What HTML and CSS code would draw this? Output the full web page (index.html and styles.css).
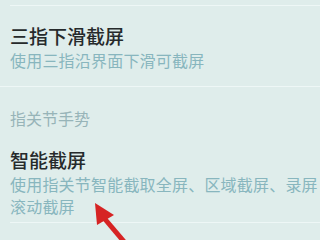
FILE: index.html
```html
<!DOCTYPE html>
<html lang="zh-CN">
<head>
    <meta charset="UTF-8">
    <meta name="viewport" content="width=device-width, initial-scale=1.0">
    <title>快捷启动及手势</title>
    <link rel="stylesheet" href="styles.css">
</head>
<body>
    <div class="settings">
        <div class="line short"></div>
        <div class="item">
            <p class="title">三指下滑截屏</p>
            <p class="desc">使用三指沿界面下滑可截屏</p>
        </div>
        <div class="line"></div>
        <p class="section">指关节手势</p>
        <div class="item last">
            <p class="title">智能截屏</p>
            <p class="desc">使用指关节智能截取全屏、区域截屏、录屏滚动截屏</p>
        </div>
        <div class="line short"></div>
        <div class="item">
            <p class="title">字母手势</p>
        </div>
    </div>

    <svg class="arrow" width="320" height="240" viewBox="0 0 320 240">
        <line x1="104" y1="218" x2="126" y2="244" stroke="#d62424" stroke-width="5"/>
        <polygon points="95,203 97,225 114,215" fill="#d62424"/>
    </svg>
</body>
</html>
```

FILE: styles.css
```css
body {
    margin: 0;
    background-color: #dfedeb;
    font-family: "Noto Sans CJK SC", "Noto Sans", sans-serif;
    overflow: hidden;
}
.settings {
    width: 320px;
    height: 240px;
    overflow: hidden;
}
.line {
    height: 1px;
    background-color: #eef7f6;
}
.line.short {
    margin: 5px 0 0 10px;
}
.item {
    padding: 17px 0 15px 10px;
}
.item.last {
    padding-bottom: 0;
}
.item p {
    margin: 0;
}
.title {
    font-size: 19px;
    line-height: 26px;
    font-weight: 500;
    color: #262a2b;
}
.desc {
    font-size: 16px;
    line-height: 22px;
    letter-spacing: 0.2px;
    color: #88b6be;
}
.section {
    margin: 0;
    padding: 20px 0 1px 10px;
    font-size: 16px;
    line-height: 22px;
    color: #97b4b8;
}
.arrow {
    position: absolute;
    left: 0;
    top: 0;
}
```
